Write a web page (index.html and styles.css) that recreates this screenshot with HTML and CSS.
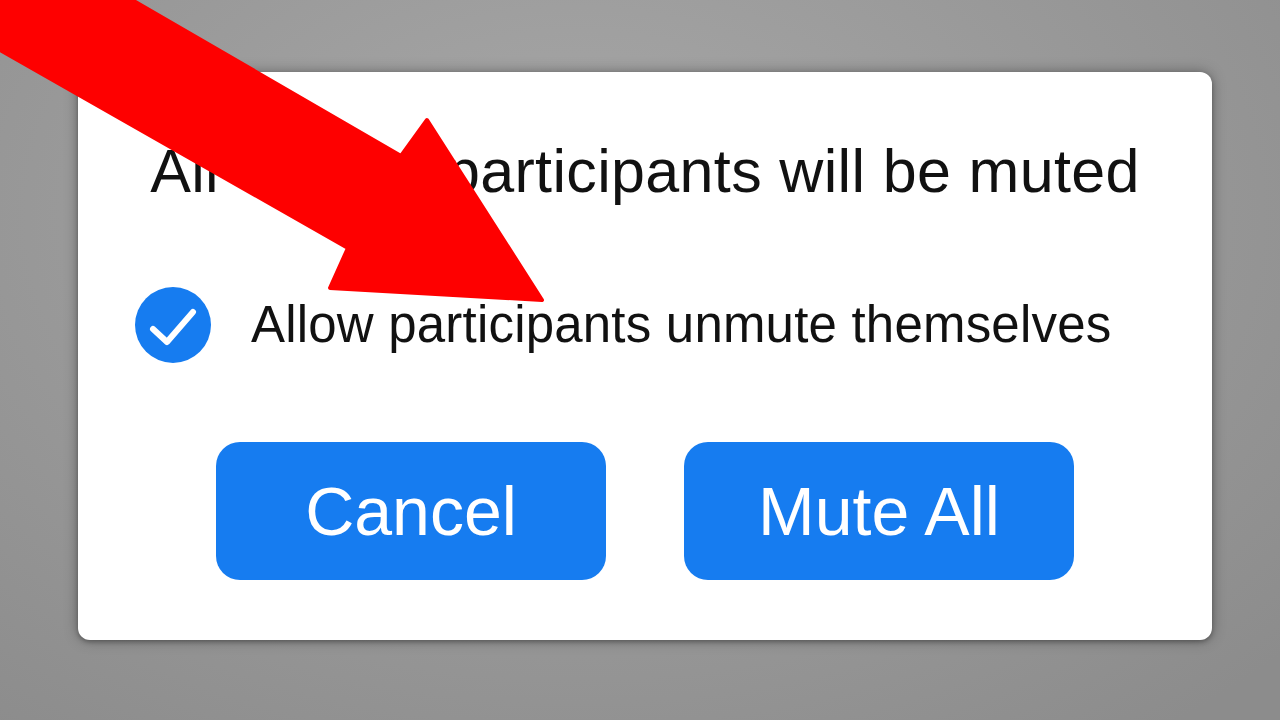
FILE: index.html
```html
<!DOCTYPE html>
<html lang="en">
<head>
<meta charset="utf-8">
<title>Mute All</title>
<link rel="stylesheet" href="styles.css">
</head>
<body>
  <div class="dialog">
    <p class="title">All current participants will be muted</p>
    <label class="option">
      <span class="check">
        <svg viewBox="0 0 76 76" width="76" height="76" aria-hidden="true">
          <circle cx="38" cy="38" r="38" fill="#167cf0"/>
          <path d="M18 42 L32 55 L58 25" fill="none" stroke="#fff" stroke-width="6" stroke-linecap="round" stroke-linejoin="round"/>
        </svg>
      </span>
      <span class="option-text">Allow participants unmute themselves</span>
    </label>
    <div class="actions">
      <button class="btn">Cancel</button>
      <button class="btn">Mute All</button>
    </div>
  </div>
  <svg class="arrow" viewBox="0 0 1280 720" width="1280" height="720" aria-hidden="true">
    <polygon points="-10,-10 132,-10 132,0 401,156 427,120 542,300 330,288 348,248 0,50 -10,44" fill="#fe0000" stroke="#fe0000" stroke-width="4" stroke-linejoin="round"/>
  </svg>
</body>
</html>
```

FILE: styles.css
```css
html, body {
  margin: 0;
  height: 100%;
}
body {
  width: 1280px;
  height: 720px;
  box-sizing: border-box;
  padding: 72px 0 0 78px;
  overflow: hidden;
  position: relative;
  background: radial-gradient(ellipse 75% 90% at 45% 30%, #a8a8a8 0%, #9a9a9a 50%, #8c8c8c 100%);
  font-family: "Liberation Sans", Arial, Helvetica, sans-serif;
}
.dialog {
  width: 1134px;
  height: 568px;
  box-sizing: border-box;
  background: #fff;
  border-radius: 12px;
  box-shadow: 0 0 14px rgba(0, 0, 0, 0.35), 0 2px 4px rgba(0, 0, 0, 0.25);
  padding: 69px 0 0 0;
  display: flex;
  flex-direction: column;
}
.title {
  margin: 0;
  font-size: 61px;
  line-height: 61px;
  color: #111;
  text-align: center;
  letter-spacing: 0.35px;
}
.option {
  margin: 85px 0 0 57px;
  display: flex;
  align-items: center;
  gap: 40px;
  height: 76px;
}
.check {
  display: block;
  width: 76px;
  height: 76px;
}
.check svg {
  display: block;
}
.option-text {
  font-size: 51px;
  line-height: 76px;
  color: #111;
  letter-spacing: 0.2px;
}
.actions {
  margin-top: 79px;
  display: flex;
  justify-content: center;
  gap: 78px;
}
.btn {
  width: 390px;
  height: 138px;
  border: none;
  border-radius: 24px;
  background: #167cf0;
  color: #fff;
  font-family: "Liberation Sans", Arial, Helvetica, sans-serif;
  font-size: 68px;
  padding: 0;
}
.arrow {
  position: absolute;
  left: 0;
  top: 0;
  pointer-events: none;
}
```
